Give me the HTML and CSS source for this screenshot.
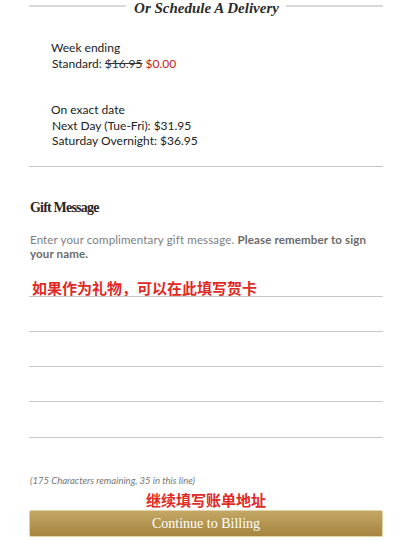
FILE: index.html
```html
<!DOCTYPE html>
<html>
<head>
<meta charset="utf-8">
<link rel="stylesheet" href="styles.css">
</head>
<body>
<div class="page">
  <div class="heading">
    <span class="rule"></span>
    <span class="heading-text">Or Schedule A Delivery</span>
    <span class="rule"></span>
  </div>
  <div class="option first">
    <div class="opt-title">Week ending</div>
    <div class="opt-line">Standard: <s>$16.95</s> <span class="free">$0.00</span></div>
  </div>
  <div class="option second">
    <div class="opt-title">On exact date</div>
    <div class="opt-line">Next Day (Tue-Fri): $31.95</div>
    <div class="opt-line">Saturday Overnight: $36.95</div>
  </div>
  <div class="divider"></div>
  <h2 class="gift-title">Gift Message</h2>
  <p class="gift-desc">Enter your complimentary gift message. <b>Please remember to sign your name.</b></p>
  <div class="note">如果作为礼物，可以在此填写贺卡</div>
  <div class="lines">
    <div class="line"></div>
    <div class="line"></div>
    <div class="line"></div>
    <div class="line"></div>
    <div class="line"></div>
  </div>
  <div class="remaining">(175 Characters remaining, 35 in this line)</div>
  <div class="note center">继续填写账单地址</div>
  <div class="button">Continue to Billing</div>
</div>
</body>
</html>
```
FILE: styles.css
```css
html, body {
  margin: 0;
  padding: 0;
  background: #ffffff;
}
.page {
  width: 354px;
  margin-left: 29px;
  font-family: "Lato", "Open Sans", sans-serif;
  color: #222;
}
.heading {
  display: flex;
  align-items: flex-start;
  height: 17px;
}
.rule {
  flex: 1;
  height: 2px;
  margin-top: 5px;
  background: #d9d9d9;
}
.heading-text {
  font-family: "Liberation Serif", serif;
  font-style: italic;
  font-weight: bold;
  font-size: 15px;
  color: #2b2b2b;
  padding: 0 7px 0 8px;
  line-height: 17px;
}
.option {
  padding-left: 22px;
  font-size: 12px;
  line-height: 15.5px;
  color: #222;
}
.option.first {
  margin-top: 23px;
}
.option.second {
  margin-top: 31px;
}
.opt-line {
  padding-left: 1px;
}
.opt-line s {
  color: #333;
}
.free {
  color: #c5231b;
}
.divider {
  height: 1px;
  background: #c4c4c4;
  margin-top: 17px;
}
.gift-title {
  font-family: "Liberation Serif", serif;
  font-weight: bold;
  font-size: 14px;
  letter-spacing: -0.8px;
  color: #2e2522;
  margin: 33px 0 0 1px;
  line-height: 16px;
}
.gift-desc {
  margin: 17px 0 0 1px;
  font-size: 11.5px;
  letter-spacing: 0.15px;
  line-height: 14px;
  color: #7e7e7e;
}
.gift-desc b {
  color: #6a6a6a;
}
.note {
  font-family: "Noto Sans CJK SC", sans-serif;
  font-weight: bold;
  font-size: 15px;
  line-height: 18px;
  color: #e02a25;
  margin-top: 18px;
  padding-left: 3px;
}
.lines {
  display: flex;
  flex-direction: column;
  gap: 34.3px;
  margin-top: -1px;
}
.line {
  height: 1px;
  background: #c8c8c8;
}
.remaining {
  margin-top: 37px;
  font-size: 9.5px;
  font-style: italic;
  color: #777;
  line-height: 12px;
  padding-left: 1px;
}
.note.center {
  text-align: center;
  margin-top: 4px;
  padding-left: 0;
}
.button {
  margin-top: 1px;
  height: 25px;
  border: 1px solid #e2d4a9;
  border-radius: 2px;
  background: linear-gradient(#c3a764, #a5853f);
  color: #fff;
  font-family: "Liberation Serif", serif;
  font-size: 14px;
  text-align: center;
  line-height: 25px;
  box-shadow: 0 1px 1px rgba(0,0,0,0.15);
}
```
